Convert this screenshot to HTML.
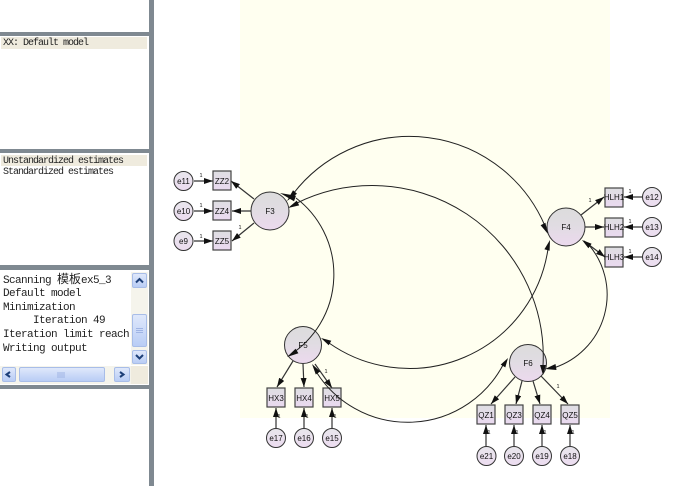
<!DOCTYPE html>
<html>
<head>
<meta charset="utf-8">
<style>
html,body{margin:0;padding:0;background:#fff;}
#r{position:relative;width:680px;height:486px;overflow:hidden;background:#fff;}
#r div{position:absolute;box-sizing:border-box;}
.s{background:#7f8991;}
.t{left:3px;white-space:pre;font-family:"Liberation Mono","Noto Sans CJK SC",monospace;color:#222;}
.a{font-size:10px;letter-spacing:-1px;line-height:11px;height:11px;}
.b{font-size:11px;letter-spacing:-.6px;line-height:14px;height:14px;}
.c{font-family:"Noto Sans CJK SC",sans-serif;letter-spacing:0;font-size:12px;}
.btn{background:linear-gradient(#dfe8fb,#b9cdf5);border:1px solid #a8bde8;border-radius:2px;}
svg{position:absolute;left:0;top:0;}
svg text{font-family:"Liberation Sans",sans-serif;font-size:8px;fill:#111;text-anchor:middle;}
svg text.n{font-size:5.5px;}
</style>
</head>
<body>
<div id="r">
<div style="left:240px;top:0;width:370px;height:418px;background:#fffff0;"></div>

<div class="s" style="left:149px;top:0;width:5px;height:486px;"></div>
<div class="s" style="left:0;top:32px;width:149px;height:4px;"></div>
<div class="s" style="left:0;top:149px;width:149px;height:4px;"></div>
<div class="s" style="left:0;top:265px;width:149px;height:5px;"></div>
<div class="s" style="left:0;top:385px;width:149px;height:4px;"></div>

<div style="left:1px;top:37px;width:146px;height:12px;background:#efebde;"></div>
<div class="t a" style="top:38px;">XX: Default model</div>
<div style="left:1px;top:155px;width:146px;height:11px;background:#efebde;"></div>
<div class="t a" style="top:156px;">Unstandardized estimates</div>
<div class="t a" style="top:167px;">Standardized estimates</div>

<div class="t b" style="top:272px;">Scanning <span class="c">模板</span>ex5_3</div>
<div class="t b" style="top:287px;">Default model</div>
<div class="t b" style="top:301px;">Minimization</div>
<div class="t b" style="top:314px;">     Iteration 49</div>
<div class="t b" style="top:328px;">Iteration limit reach</div>
<div class="t b" style="top:342px;">Writing output</div>

<div style="left:131px;top:272px;width:17px;height:93px;background:#f5f4ec;"></div>
<div class="btn" style="left:132px;top:273px;width:15px;height:15px;"></div>
<div class="btn" style="left:132px;top:314px;width:15px;height:33px;"></div>
<div class="btn" style="left:132px;top:350px;width:15px;height:14px;"></div>
<div style="left:0;top:366px;width:148px;height:18px;background:#f5f4ec;"></div>
<div style="left:131px;top:366px;width:17px;height:18px;background:#efebde;"></div>
<div class="btn" style="left:2px;top:367px;width:14px;height:15px;"></div>
<div class="btn" style="left:19px;top:367px;width:86px;height:15px;"></div>
<div class="btn" style="left:114px;top:367px;width:16px;height:15px;"></div>

<svg width="680" height="486" viewBox="0 0 680 486">
<defs>
<linearGradient id="g" x1="0" y1="0" x2="0" y2="1"><stop offset="0" stop-color="#dcdcdc"/><stop offset=".45" stop-color="#e0dce2"/><stop offset="1" stop-color="#ecd9ee"/></linearGradient>
<linearGradient id="h" x1="0" y1="0" x2="0" y2="1"><stop offset="0" stop-color="#dedee2"/><stop offset="1" stop-color="#ead9f0"/></linearGradient>
<linearGradient id="e" x1="0" y1="0" x2="0" y2="1"><stop offset="0" stop-color="#e8e6ec"/><stop offset="1" stop-color="#ecdcf0"/></linearGradient>
<marker id="m" markerUnits="userSpaceOnUse" markerWidth="10" markerHeight="6" refX="9" refY="3" orient="auto"><path d="M0 0L9 3L0 6Z" fill="#111"/></marker>
</defs>

<g fill="none" stroke="#333" stroke-width="1.2" marker-end="url(#m)">
<path d="M254 199L231 181"/><path d="M251 211L232 211"/><path d="M254 223L232 241"/>
<path d="M194 181L213 181"/><path d="M194 211L213 211"/><path d="M194 241L213 241"/>
<path d="M581 215L604 197"/><path d="M584 227L604 227"/><path d="M584 241L605 257"/>
<path d="M642 197L624 197"/><path d="M642 227L624 227"/><path d="M642 257L624 257"/>
<path d="M293 361L277 387"/><path d="M303 364L304 387"/><path d="M315 364L332 388"/>
<path d="M276 428L276 408"/><path d="M304 428L304 408"/><path d="M332 428L332 408"/>
<path d="M515 377L491 404"/><path d="M522 381L516 404"/><path d="M533 381L540 404"/><path d="M541 376L568 404"/>
<path d="M486 446L486 425"/><path d="M514 446L514 425"/><path d="M542 446L542 425"/><path d="M570 446L570 425"/>
</g>

<g stroke="#333" stroke-width="1" fill="url(#g)">
<circle cx="270" cy="211" r="19"/>
<circle cx="566" cy="227" r="19"/>
<circle cx="303" cy="345" r="18.5"/>
<circle cx="528" cy="363" r="18.5"/>
</g>

<g stroke="#444" stroke-width="1.2" fill="url(#h)">
<rect x="213" y="171" width="18" height="19"/><rect x="213" y="201" width="18" height="19"/><rect x="213" y="231" width="18" height="19"/>
<rect x="605" y="188" width="18" height="19"/><rect x="605" y="218" width="18" height="19"/><rect x="605" y="247" width="18" height="20"/>
<rect x="267" y="388" width="18" height="19"/><rect x="295" y="388" width="18" height="19"/><rect x="323" y="388" width="18" height="19"/>
<rect x="477" y="405" width="18" height="19"/><rect x="505" y="405" width="18" height="19"/><rect x="533" y="405" width="18" height="19"/><rect x="561" y="405" width="18" height="19"/>
</g>

<g stroke="#333" stroke-width="1" fill="url(#e)">
<circle cx="183.500" cy="181" r="9.500"/><circle cx="183.500" cy="211" r="9.500"/><circle cx="183.500" cy="241" r="9.500"/>
<circle cx="652" cy="197" r="9.500"/><circle cx="652" cy="227" r="9.500"/><circle cx="652" cy="257" r="9.500"/>
<circle cx="276" cy="438" r="9.500"/><circle cx="304" cy="438" r="9.500"/><circle cx="332" cy="438" r="9.500"/>
<circle cx="486.500" cy="456" r="9.500"/><circle cx="514" cy="456" r="9.500"/><circle cx="542" cy="456" r="9.500"/><circle cx="570" cy="456" r="9.500"/>
</g>

<g fill="none" stroke="#222" stroke-width="1">
<path d="M293 194A147 147 0 0 1 545 226"/>
<path d="M297 203A171 171 0 0 1 543 366"/>
<path d="M296 198A96 96 0 0 1 290 355"/>
<path d="M329 343A140 140 0 0 0 548 249"/>
<path d="M589 245A77 77 0 0 1 555 367.500"/>
<path d="M317 373A108 108 0 0 0 503 365"/>
</g>
<g fill="#111">
<polygon points="280,193 296,195.700 294,201.300"/>
<polygon points="287,201 297,193.800 293,190.200"/>
<polygon points="288,208 299.200,205.400 296.800,200.600"/>
<polygon points="548,234 545.400,222.800 540.600,225.200"/>
<polygon points="550,240 549.600,250.800 544.400,249.200"/>
<polygon points="582,240 591.600,243.800 588.400,248.200"/>
<polygon points="287,357 298.400,353.300 295.600,348.700"/>
<polygon points="321,338 331.300,340.700 328.700,345.300"/>
<polygon points="312,364 320.200,371.500 315.800,374.500"/>
<polygon points="543,375 546,365 540,365"/>
<polygon points="545,369 556.500,370 555.500,364"/>
<polygon points="508,358 505.300,367.400 500.700,364.600"/>
</g>

<text x="270" y="214">F3</text><text x="566" y="230">F4</text><text x="303" y="348">F5</text><text x="528" y="366">F6</text>
<text x="222" y="184">ZZ2</text><text x="222" y="214">ZZ4</text><text x="222" y="244">ZZ5</text>
<text x="614" y="200">HLH1</text><text x="614" y="230">HLH2</text><text x="614" y="260">HLH3</text>
<text x="276" y="401">HX3</text><text x="304" y="401">HX4</text><text x="332" y="401">HX5</text>
<text x="486" y="418">QZ1</text><text x="514" y="418">QZ3</text><text x="542" y="418">QZ4</text><text x="570" y="418">QZ5</text>
<text x="183.500" y="184">e11</text><text x="183.500" y="214">e10</text><text x="183.500" y="244">e9</text>
<text x="652" y="200">e12</text><text x="652" y="230">e13</text><text x="652" y="260">e14</text>
<text x="276" y="441">e17</text><text x="304" y="441">e16</text><text x="332" y="441">e15</text>
<text x="486.500" y="459">e21</text><text x="514" y="459">e20</text><text x="542" y="459">e19</text><text x="570" y="459">e18</text>

<g>
<text class="n" x="201" y="177">1</text><text class="n" x="201" y="207">1</text><text class="n" x="201" y="238">1</text><text class="n" x="240" y="229">1</text>
<text class="n" x="590" y="202">1</text><text class="n" x="630" y="193">1</text><text class="n" x="630" y="223">1</text><text class="n" x="630" y="253">1</text>
<text class="n" x="326" y="373">1</text><text class="n" x="279" y="418">1</text><text class="n" x="307" y="418">1</text><text class="n" x="335" y="418">1</text>
<text class="n" x="558" y="388">1</text><text class="n" x="489" y="434">1</text><text class="n" x="517" y="434">1</text><text class="n" x="545" y="434">1</text><text class="n" x="573" y="434">1</text>
</g>

<g fill="none" stroke="#1d3f78" stroke-width="2">
<path d="M136 282.500L139.500 279L143 282.500"/>
<path d="M136 355L139.500 358.500L143 355"/>
<path d="M10 372L6.500 374.500L10 377"/>
<path d="M120 372L123.500 374.500L120 377"/>
</g>
<g stroke="#9fb4e4" stroke-width="1">
<path d="M136 328.500H143M136 330.500H143M136 332.500H143"/>
<path d="M58 372V378M60 372V378M62 372V378M64 372V378"/>
</g>
</svg>
</div>
</body>
</html>
